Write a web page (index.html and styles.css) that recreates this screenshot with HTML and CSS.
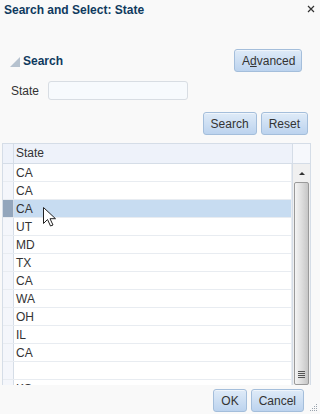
FILE: index.html
```html
<!DOCTYPE html>
<html lang="en">
  <head>
    <meta charset="UTF-8" />
    <meta name="viewport" content="width=device-width, initial-scale=1.0" />
    <title>Search and Select: State</title>
    <link rel="stylesheet" href="styles.css">
  </head>
  <body>
    <div class="dialog">
      <div class="title-bar">
        <h1>Search and Select: State</h1>
        <svg class="close" viewBox="0 0 8 8">
          <path d="M1 1l6 6M7 1l-6 6" />
        </svg>
      </div>

      <div class="search-head">
        <span class="disclosure"></span>
        <h2>Search</h2>
        <button class="btn advanced">A<u>d</u>vanced</button>
      </div>

      <div class="field">
        <label for="state">State</label>
        <input id="state" type="text" />
      </div>

      <div class="actions">
        <button class="btn">Search</button>
        <button class="btn">Reset</button>
      </div>

      <div class="grid">
        <div class="grid-head">
          <div class="rh"></div>
          <div class="hcell">State</div>
          <div class="corner"></div>
        </div>
        <div class="grid-body">
          <div class="rows">
            <div class="row"><div class="rh"></div><div class="cell">CA</div></div>
            <div class="row"><div class="rh"></div><div class="cell">CA</div></div>
            <div class="row selected"><div class="rh"></div><div class="cell">CA</div></div>
            <div class="row"><div class="rh"></div><div class="cell">UT</div></div>
            <div class="row"><div class="rh"></div><div class="cell">MD</div></div>
            <div class="row"><div class="rh"></div><div class="cell">TX</div></div>
            <div class="row"><div class="rh"></div><div class="cell">CA</div></div>
            <div class="row"><div class="rh"></div><div class="cell">WA</div></div>
            <div class="row"><div class="rh"></div><div class="cell">OH</div></div>
            <div class="row"><div class="rh"></div><div class="cell">IL</div></div>
            <div class="row"><div class="rh"></div><div class="cell">CA</div></div>
            <div class="row"><div class="rh"></div><div class="cell"></div></div>
            <div class="row"><div class="rh"></div><div class="cell">KS</div></div>
          </div>
          <div class="scrollbar">
            <div class="scroll-up"><span class="arrow"></span></div>
            <div class="thumb">
              <span class="grip"></span>
            </div>
          </div>
        </div>
        <svg class="cursor" viewBox="0 0 13 20">
          <path d="M0.5 0.5v16l4-4 3 6.5 2.5-1-3-6.3h5.5z" />
        </svg>
      </div>

      <div class="footer">
        <button class="btn">OK</button>
        <button class="btn">Cancel</button>
        <svg class="resize" viewBox="0 0 9 9">
          <rect x="7" y="1" width="1" height="1" />
          <rect x="5" y="3" width="1" height="1" />
          <rect x="7" y="3" width="1" height="1" />
          <rect x="3" y="5" width="1" height="1" />
          <rect x="5" y="5" width="1" height="1" />
          <rect x="7" y="5" width="1" height="1" />
          <rect x="1" y="7" width="1" height="1" />
          <rect x="3" y="7" width="1" height="1" />
          <rect x="5" y="7" width="1" height="1" />
          <rect x="7" y="7" width="1" height="1" />
        </svg>
      </div>
    </div>
  </body>
</html>
```

FILE: styles.css
```css
:root {
  --title: #0f3a5e;
  --text: #333333;
  --line: #d5dde7;
  --row-line: #e8ecf1;
  --selected: #c7dcf1;
}

body {
  margin: 0;
  width: 320px;
  height: 414px;
  overflow: hidden;
  background: #f9f9f9;
  font-family: "Liberation Sans", Arial, sans-serif;
  font-size: 12px;
  color: var(--text);
}

.dialog {
  position: relative;
  display: flex;
  flex-direction: column;
  height: 414px;
}

.title-bar {
  display: flex;
  align-items: center;
  justify-content: space-between;
  height: 18px;
  padding: 0 5px 0 4px;
  margin-top: 1px;
}

h1 {
  margin: 0;
  font-size: 12px;
  font-weight: 700;
  color: var(--title);
}

.close {
  width: 8px;
  height: 8px;
  margin-top: -2px;
}

.close path {
  stroke: #333;
  stroke-width: 1.2;
  fill: none;
}

.search-head {
  display: flex;
  align-items: center;
  height: 23px;
  margin-top: 30px;
  padding: 0 18px 0 10px;
}

.disclosure {
  width: 0;
  height: 0;
  border-left: 10px solid transparent;
  border-bottom: 10px solid #b6c2cf;
  margin: 2px 3px 0 0;
}

h2 {
  margin: 0;
  font-size: 12px;
  font-weight: 700;
  color: var(--title);
  flex: 1;
}

.btn {
  height: 23px;
  padding: 0 7px;
  border: 1px solid #a4bedb;
  border-radius: 3px;
  background: linear-gradient(#dfebf8, #bcd3ee);
  font-family: inherit;
  font-size: 12px;
  color: var(--text);
  box-shadow: inset 0 1px 0 rgba(255, 255, 255, 0.5);
}

.advanced {
  width: 68px;
}

.field {
  display: flex;
  align-items: center;
  gap: 9px;
  margin-top: 9px;
  padding-left: 11px;
}

input {
  width: 140px;
  height: 19px;
  box-sizing: border-box;
  border: 1px solid #d8dde3;
  border-radius: 3px;
  background: #f7fafd;
}

.actions {
  display: flex;
  justify-content: flex-end;
  gap: 4px;
  margin-top: 12px;
  padding-right: 12px;
}

.grid {
  position: relative;
  margin: 8px 9px 0 2px;
  border: 1px solid var(--line);
  border-bottom: none;
  height: 241px;
  display: flex;
  flex-direction: column;
  overflow: hidden;
}

.grid-head {
  display: flex;
  height: 19px;
  background: #eef2fa;
  border-bottom: 1px solid var(--line);
}

.rh {
  width: 10px;
  flex-shrink: 0;
  background: #f4f6fb;
  border-right: 1px solid var(--line);
}

.grid-head .rh {
  background: #eef2fa;
}

.hcell {
  flex: 1;
  padding-left: 2px;
  line-height: 19px;
}

.corner {
  width: 17px;
  background: #f6f8fc;
  border-left: 1px solid var(--line);
}

.grid-body {
  display: flex;
  flex: 1;
  min-height: 0;
}

.rows {
  flex: 1;
  background: #fff;
}

.row {
  display: flex;
  height: 18px;
  box-sizing: border-box;
  border-bottom: 1px solid var(--row-line);
}

.cell {
  flex: 1;
  padding-left: 2px;
  line-height: 18px;
  border-right: 1px solid var(--row-line);
}

.row.selected {
  background: var(--selected);
}

.row.selected .rh {
  background: #93a6bc;
}

.scrollbar {
  width: 17px;
  display: flex;
  flex-direction: column;
  background: #f0f0f0;
  border-left: 1px solid var(--line);
}

.scroll-up {
  height: 18px;
  display: flex;
  justify-content: center;
  align-items: center;
}

.arrow {
  width: 0;
  height: 0;
  border-left: 3px solid transparent;
  border-right: 3px solid transparent;
  border-bottom: 3px solid #333;
}

.thumb {
  flex: 1;
  margin: 0 1px 0 1px;
  border: 1px solid #9a9a9a;
  border-radius: 2px;
  background: linear-gradient(to right, #f4f4f4, #dedede 50%, #c6c6c6);
  display: flex;
  align-items: flex-end;
  justify-content: center;
  padding-bottom: 6px;
}

.grip {
  width: 7px;
  height: 7px;
  background: repeating-linear-gradient(#555 0 1px, transparent 1px 2px);
}

.cursor {
  position: absolute;
  left: 40px;
  top: 63px;
  width: 13px;
  height: 20px;
}

.cursor path {
  fill: #fff;
  stroke: #222;
  stroke-width: 1;
}

.footer {
  display: flex;
  justify-content: flex-end;
  gap: 4px;
  margin-top: 4px;
  padding-right: 16px;
}

.resize {
  position: absolute;
  right: 2px;
  bottom: 2px;
  width: 9px;
  height: 9px;
  fill: #9aa4ae;
}
```
